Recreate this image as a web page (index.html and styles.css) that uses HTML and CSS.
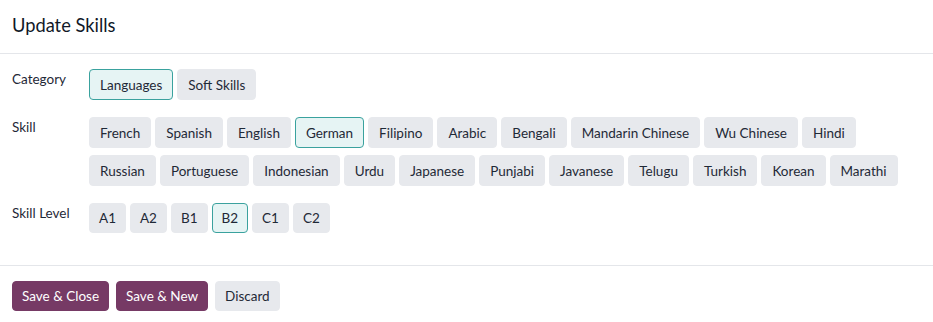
FILE: index.html
```html
<!DOCTYPE html>
<html lang="en">
<head>
    <meta charset="UTF-8">
    <meta name="viewport" content="width=device-width, initial-scale=1.0">
    <title>Update Skills</title>
    <link rel="stylesheet" href="styles.css">
</head>
<body>
    <div class="modal">
        <div class="modal-header">
            <h4 class="modal-title">Update Skills</h4>
        </div>
        <div class="modal-body">
            <div class="field">
                <label class="field-label">Category</label>
                <div class="choices">
                    <button class="chip active">Languages</button>
                    <button class="chip">Soft Skills</button>
                </div>
            </div>
            <div class="field">
                <label class="field-label">Skill</label>
                <div class="choices">
                    <button class="chip">French</button>
                    <button class="chip">Spanish</button>
                    <button class="chip">English</button>
                    <button class="chip active">German</button>
                    <button class="chip">Filipino</button>
                    <button class="chip">Arabic</button>
                    <button class="chip">Bengali</button>
                    <button class="chip">Mandarin Chinese</button>
                    <button class="chip">Wu Chinese</button>
                    <button class="chip">Hindi</button>
                    <button class="chip">Russian</button>
                    <button class="chip">Portuguese</button>
                    <button class="chip">Indonesian</button>
                    <button class="chip">Urdu</button>
                    <button class="chip">Japanese</button>
                    <button class="chip">Punjabi</button>
                    <button class="chip">Javanese</button>
                    <button class="chip">Telugu</button>
                    <button class="chip">Turkish</button>
                    <button class="chip">Korean</button>
                    <button class="chip">Marathi</button>
                </div>
            </div>
            <div class="field">
                <label class="field-label">Skill Level</label>
                <div class="choices levels">
                    <button class="chip">A1</button>
                    <button class="chip">A2</button>
                    <button class="chip">B1</button>
                    <button class="chip active">B2</button>
                    <button class="chip">C1</button>
                    <button class="chip">C2</button>
                </div>
            </div>
        </div>
        <div class="modal-footer">
            <button class="btn btn-primary">Save &amp; Close</button>
            <button class="btn btn-primary">Save &amp; New</button>
            <button class="btn btn-secondary">Discard</button>
        </div>
    </div>
</body>
</html>
```
FILE: styles.css
```css
body {
    margin: 0;
    background-color: #ffffff;
    color: #212529;
    font-family: "Lato", "Open Sans", sans-serif;
    font-size: 13.5px;
}
.modal {
    width: 933px;
    height: 322px;
}
.modal-header {
    height: 53px;
    border-bottom: 1px solid #e4e6ea;
    display: flex;
    align-items: center;
    padding: 0 12px;
}
.modal-title {
    margin: 0;
    font-size: 18.3px;
    font-weight: 400;
    color: #111827;
    padding-bottom: 4px;
}
.modal-body {
    padding: 15px 12px 25px 12px;
    border-bottom: 1px solid #e4e6ea;
}
.field {
    display: flex;
    align-items: flex-start;
    margin-bottom: 10px;
}
.field:last-child {
    margin-bottom: 0;
}
.field-label {
    width: 77px;
    flex-shrink: 0;
    line-height: 21px;
    color: #1f2937;
}
.choices {
    display: flex;
    flex-wrap: wrap;
    flex: 1;
}
.chip {
    height: 31px;
    margin: 0 4px 7px 0;
    padding: 0 10px;
    border: 1px solid #e7e9ed;
    border-radius: 4px;
    background-color: #e7e9ed;
    color: #1f2937;
    font-family: inherit;
    font-size: 13.5px;
}
.levels .chip {
    height: 30px;
    padding: 0 9px;
}
.chip.active {
    background-color: #e6f4f4;
    border-color: #3aa29e;
}
.modal-footer {
    display: flex;
    gap: 7px;
    padding: 15px 12px;
}
.btn {
    height: 30px;
    padding: 0 9px;
    border: 1px solid transparent;
    border-radius: 4px;
    font-family: inherit;
    font-size: 13.5px;
}
.btn-primary {
    background-color: #763a65;
    border-color: #763a65;
    color: #ffffff;
}
.btn-secondary {
    background-color: #e7e9ed;
    border-color: #e7e9ed;
    color: #1f2937;
}
```
